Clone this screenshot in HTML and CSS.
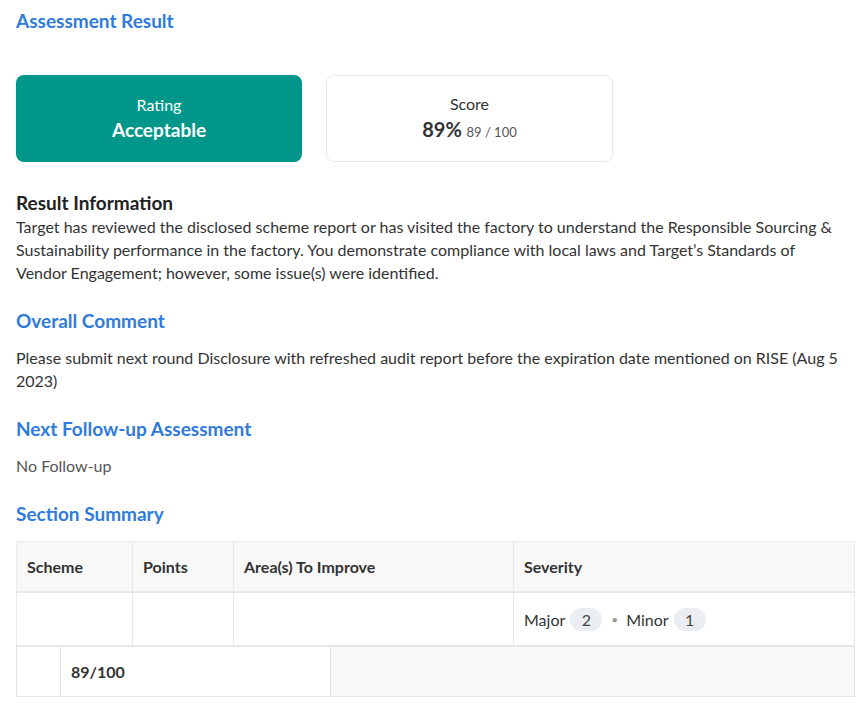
FILE: index.html
```html
<!DOCTYPE html>
<html lang="en">
<head>
<meta charset="utf-8">
<title>Assessment Result</title>
<link rel="stylesheet" href="styles.css">
</head>
<body>
<main class="page">
  <h2 class="title">Assessment Result</h2>
  <div class="cards">
    <div class="card card-rating">
      <div class="card-label">Rating</div>
      <div class="card-value">Acceptable</div>
    </div>
    <div class="card card-score">
      <div class="card-label">Score</div>
      <div class="card-value"><span class="pct">89%</span> <span class="frac">89 / 100</span></div>
    </div>
  </div>

  <h3 class="subtitle">Result Information</h3>
  <p class="info">Target has reviewed the disclosed scheme report or has visited the factory to understand the Responsible Sourcing &amp; Sustainability performance in the factory. You demonstrate compliance with local laws and Target’s Standards of Vendor Engagement; however, some issue(s) were identified.</p>

  <h2 class="title section">Overall Comment</h2>
  <p class="text comment">Please submit next round Disclosure with refreshed audit report before the expiration date mentioned on RISE (Aug 5 2023)</p>

  <h2 class="title section">Next Follow-up Assessment</h2>
  <p class="text muted">No Follow-up</p>

  <h2 class="title section">Section Summary</h2>
  <div class="table">
    <div class="row head">
      <div class="cell c1">Scheme</div>
      <div class="cell c2">Points</div>
      <div class="cell c3">Area(s) To Improve</div>
      <div class="cell c4">Severity</div>
    </div>
    <div class="row body">
      <div class="cell c1"></div>
      <div class="cell c2"></div>
      <div class="cell c3"></div>
      <div class="cell c4">
        <span class="sev">Major</span><span class="pill">2</span><span class="dot">•</span><span class="sev">Minor</span><span class="pill">1</span>
      </div>
    </div>
    <div class="row total">
      <div class="cell t1"></div>
      <div class="cell t2">89/100</div>
      <div class="cell t3"></div>
    </div>
  </div>
</main>
</body>
</html>
```
FILE: styles.css
```css
* { box-sizing: border-box; }
body {
  margin: 0;
  font-family: "Lato", "Noto Sans", sans-serif;
  color: #333;
  background: #fff;
}
.page {
  padding: 8px 16px 16px 16px;
}
.title {
  margin: 0;
  font-size: 19px;
  line-height: 26px;
  font-weight: 700;
  color: #2f7bdc;
}
.cards {
  display: flex;
  gap: 24px;
  margin-top: 41px;
}
.card {
  width: 287px;
  height: 87px;
  border-radius: 8px;
  display: flex;
  flex-direction: column;
  align-items: center;
  justify-content: center;
  gap: 1px;
}
.card-rating {
  background: #00978a;
  color: #fff;
  width: 286px;
}
.card-score {
  border: 1px solid #e6e8eb;
  color: #333;
}
.card-label {
  font-size: 16px;
  line-height: 22px;
}
.card-value {
  font-size: 19px;
  line-height: 26px;
  font-weight: 700;
}
.pct { font-size: 20px; font-weight: 700; color: #333; }
.frac { font-size: 13px; font-weight: 400; color: #555; }
.subtitle {
  margin: 28px 0 0;
  font-size: 19px;
  line-height: 26px;
  font-weight: 700;
  color: #222;
}
.info {
  margin: -1px 0 0;
  font-size: 16px;
  line-height: 23px;
  color: #333;
  max-width: 822px;
}
.section { margin-top: 24px; }
.text {
  margin: 12px 0 0;
  font-size: 16px;
  line-height: 23px;
  color: #333;
}
.comment { max-width: 840px; }
.muted { color: #555; }
.table {
  margin-top: 14px;
  width: 839px;
  font-size: 16px;
  color: #333;
}
.row {
  display: flex;
}
.cell {
  padding: 0 10px;
  display: flex;
  align-items: center;
}
.head {
  height: 52px;
  background: #f8f8f8;
  border: 1px solid #ebebeb;
  border-bottom: 2px solid #e8e8e8;
  font-weight: 700;
}
.body {
  height: 52px;
  border-left: 1px solid #ebebeb;
  border-right: 1px solid #ebebeb;
}
.head .cell, .body .cell { border-right: 1px solid #e8e8e8; }
.head .cell:last-child, .body .cell:last-child { border-right: none; }
.c1 { width: 116px; }
.c2 { width: 101px; }
.c3 { width: 280px; }
.c4 { flex: 1; }
.sev { color: #333; }
.pill {
  display: inline-flex;
  align-items: center;
  justify-content: center;
  min-width: 32px;
  height: 23px;
  padding: 0 10px;
  margin-left: 5px;
  border-radius: 12px;
  background: #eaeef2;
  color: #444;
}
.dot {
  color: #999;
  font-size: 12px;
  margin: 0 8px 0 9px;
}
.total {
  height: 52px;
  border: 1px solid #e6e6e6;
  border-top: 2px solid #e6e6e6;
}
.total .cell { border-right: 1px solid #e6e6e6; }
.t1 { width: 44px; }
.t2 { width: 270px; font-weight: 700; }
.t3 { flex: 1; background: #f8f8f8; border-right: none !important; }
```
